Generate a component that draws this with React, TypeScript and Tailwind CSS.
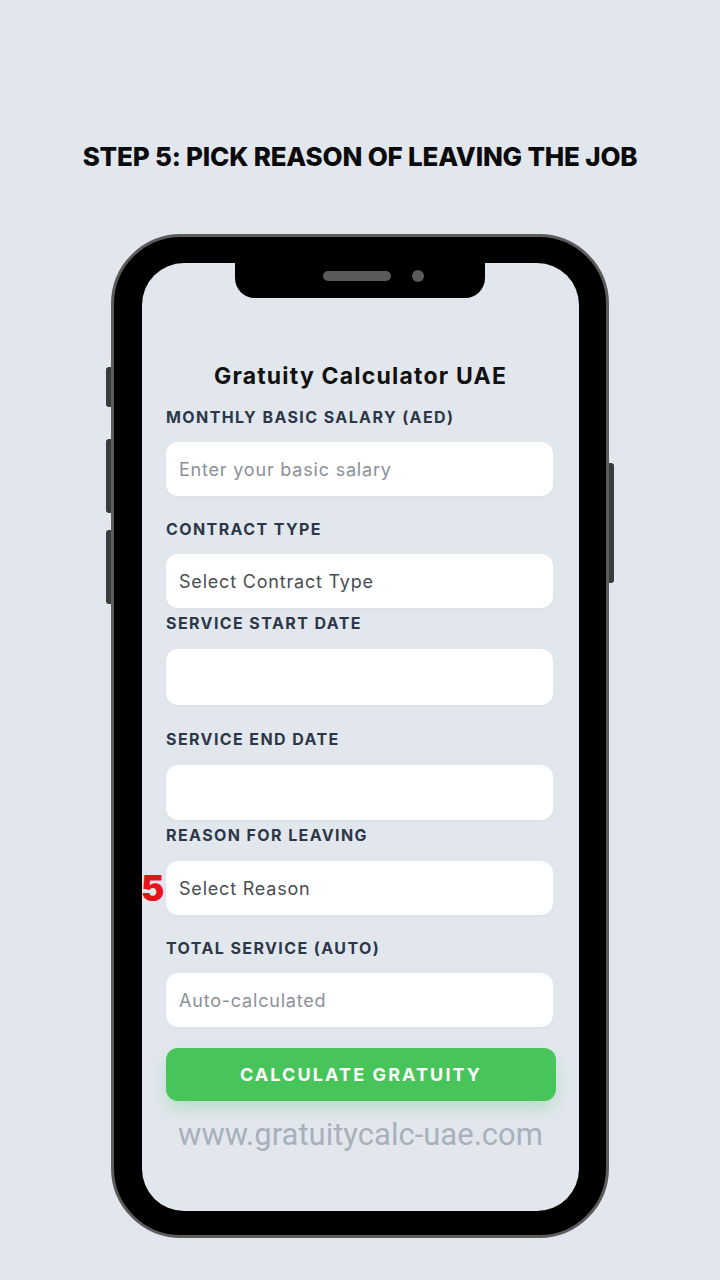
import React from "react";

const labelCls =
  "block h-[20px] text-[16px] leading-[20px] font-bold uppercase tracking-[1.4px] text-[#2d3748]";
const inputCls =
  "flex w-[387px] items-center rounded-[12px] bg-white pl-[13px] text-[18px] tracking-[0.8px] shadow-[0_1px_3px_rgba(0,0,0,0.04)]";

export default function App() {
  return (
    <div
      className="flex h-[1280px] w-[720px] flex-col items-center bg-[#e2e7ee]"
      style={{ fontFamily: "Inter, 'Open Sans', sans-serif" }}
    >
      <h1 className="mt-[141px] h-[32px] text-[26px] font-extrabold leading-[32px] tracking-[-0.2px] text-[#0b0b0b]">
        STEP 5: PICK REASON OF LEAVING THE JOB
      </h1>

      <div className="relative mt-[61px] h-[1004px] w-[498px] rounded-[70px] border-[3px] border-[#5c5c5c] bg-black pb-[24px] pl-[28px] pr-[27px] pt-[26px]">
        {/* side buttons */}
        <div className="absolute left-[-8px] top-[130px] h-[40px] w-[5px] rounded-l-[3px] bg-[#3a3a3a]" />
        <div className="absolute left-[-8px] top-[202px] h-[74px] w-[5px] rounded-l-[3px] bg-[#3a3a3a]" />
        <div className="absolute left-[-8px] top-[293px] h-[74px] w-[5px] rounded-l-[3px] bg-[#3a3a3a]" />
        <div className="absolute right-[-8px] top-[226px] h-[120px] w-[5px] rounded-r-[3px] bg-[#3a3a3a]" />

        <div className="relative flex h-full w-full flex-col overflow-hidden rounded-[42px] bg-[#e2e7ee] px-[24px]">
          {/* notch */}
          <div className="absolute left-[93px] top-0 h-[35px] w-[250px] rounded-b-[20px] bg-black">
            <div className="absolute left-[88px] top-[8px] h-[10px] w-[68px] rounded-full bg-[#5a5a5a]" />
            <div className="absolute left-[177px] top-[7px] h-[12px] w-[12px] rounded-full bg-[#5a5a5a]" />
          </div>

          <h2 className="mt-[99px] h-[28px] text-center text-[23px] font-bold leading-[28px] tracking-[1.2px] text-[#111]">
            Gratuity Calculator UAE
          </h2>

          <span className={`${labelCls} mt-[17px]`}>Monthly Basic Salary (AED)</span>
          <div className={`${inputCls} mt-[15px] h-[54px] text-[#8b9099]`}>Enter your basic salary</div>

          <span className={`${labelCls} mt-[23px]`}>Contract Type</span>
          <div className={`${inputCls} mt-[15px] h-[54px] text-[#4a4d52]`}>Select Contract Type</div>

          <span className={`${labelCls} mt-[5px]`}>Service Start Date</span>
          <div className={`${inputCls} mt-[16px] h-[56px]`} />

          <span className={`${labelCls} mt-[24px]`}>Service End Date</span>
          <div className={`${inputCls} mt-[16px] h-[55px]`} />

          <span className={`${labelCls} mt-[5px]`}>Reason for Leaving</span>
          <div className={`${inputCls} relative mt-[16px] h-[54px] text-[#4a4d52]`}>
            <span className="absolute left-[-25px] top-[8px] text-[35px] font-black leading-[38px] tracking-normal text-[#e8141c]">
              5
            </span>
            Select Reason
          </div>

          <span className={`${labelCls} mt-[23px]`}>Total Service (Auto)</span>
          <div className={`${inputCls} mt-[15px] h-[54px] text-[#8b9099]`}>Auto-calculated</div>

          <div className="mt-[21px] flex h-[53px] w-[390px] items-center justify-center rounded-[12px] bg-[#47c55a] text-[18px] font-bold uppercase tracking-[2.1px] text-white shadow-[0_8px_16px_rgba(71,197,90,0.25)]">
            Calculate Gratuity
          </div>

          <div
            className="mt-[16px] h-[36px] text-center text-[31px] leading-[36px] text-[#a9b0bb]"
            style={{ fontFamily: "Roboto, sans-serif" }}
          >
            www.gratuitycalc-uae.com
          </div>
        </div>
      </div>
    </div>
  );
}
